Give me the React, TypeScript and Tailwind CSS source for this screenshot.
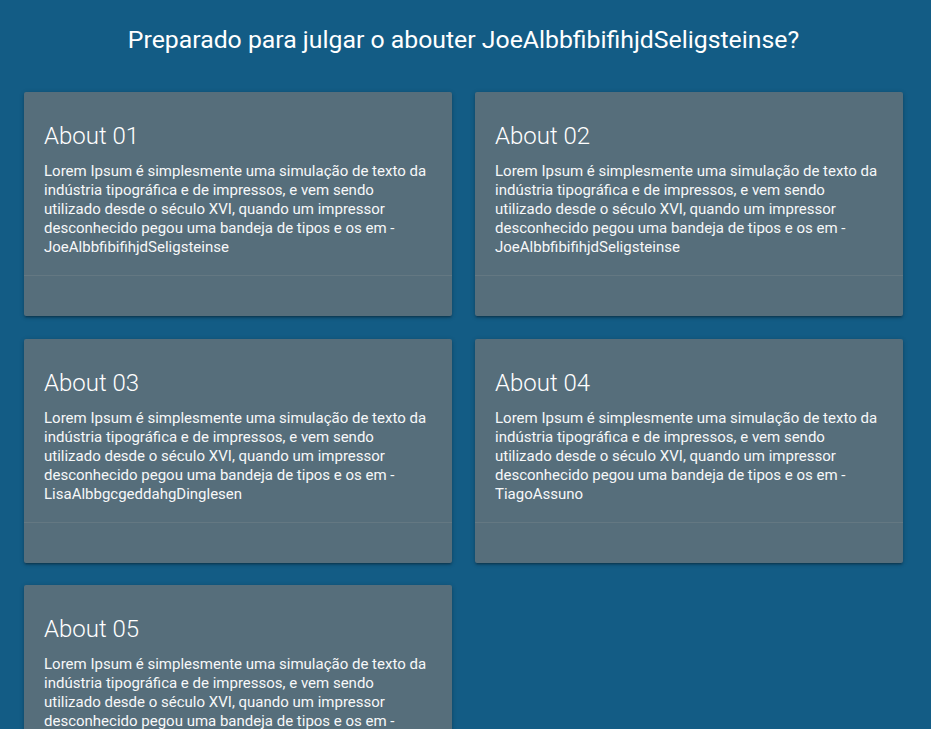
import React from 'react';

type About = { id: string; author: string };

const abouts: About[] = [
  { id: '01', author: 'JoeAlbbfibifihjdSeligsteinse' },
  { id: '02', author: 'JoeAlbbfibifihjdSeligsteinse' },
  { id: '03', author: 'LisaAlbbgcgeddahgDinglesen' },
  { id: '04', author: 'TiagoAssuno' },
  { id: '05', author: 'JoeAlbbfibifihjdSeligsteinse' },
];

const lorem =
  'Lorem Ipsum é simplesmente uma simulação de texto da indústria tipográfica e de impressos, e vem sendo utilizado desde o século XVI, quando um impressor desconhecido pegou uma bandeja de tipos e os em - ';

const AboutCard: React.FC<{ about: About }> = ({ about }) => (
  <div className="flex w-[428px] flex-col rounded-[2px] bg-[#566e7b] text-white shadow-[0_2px_2px_0_rgba(0,0,0,0.14),0_3px_1px_-2px_rgba(0,0,0,0.12),0_1px_5px_0_rgba(0,0,0,0.2)]">
    <div className="flex-1 px-5 pt-[28px] pb-[18px]">
      <span className="mb-[10px] block text-[24px] font-light leading-[32px]">About {about.id}</span>
      <p className="text-[15px] leading-[19px] text-[#f7f8f9]">
        {lorem}
        {about.author}
      </p>
    </div>
    <div className="h-[41px] border-t border-[rgba(160,160,160,0.2)]" />
  </div>
);

export default function App() {
  return (
    <div
      className="min-h-screen bg-[#135c85] pb-10"
      style={{ fontFamily: 'Roboto, "Noto Sans", sans-serif' }}
    >
      <h1 className="pt-[24px] pb-[36px] pr-1 text-center text-[24.8px] leading-[32px] text-white">
        Preparado para julgar o abouter JoeAlbbfibifihjdSeligsteinse?
      </h1>
      <div className="grid grid-cols-[428px_428px] gap-x-[23px] gap-y-[22.5px] pl-6">
        {abouts.map((a) => (
          <AboutCard key={a.id} about={a} />
        ))}
      </div>
    </div>
  );
}
